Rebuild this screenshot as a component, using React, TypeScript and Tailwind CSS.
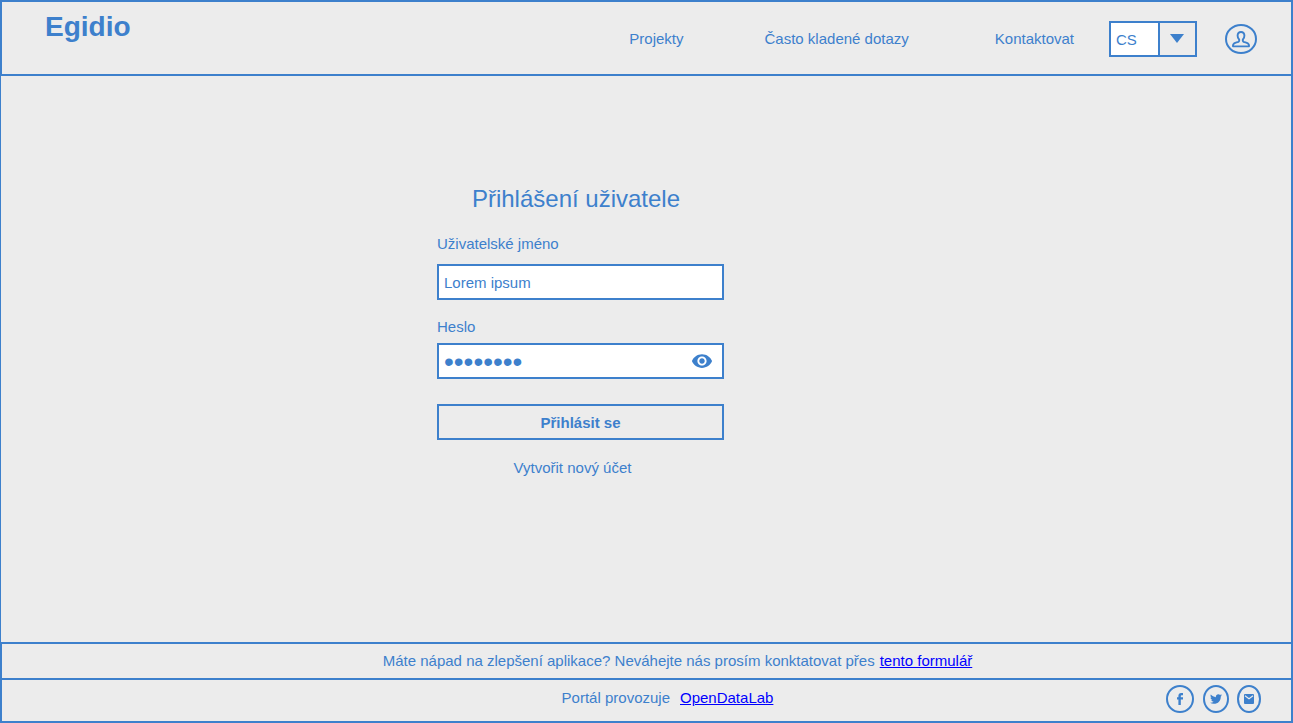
import { useState } from "react";
import { FaTwitter } from "react-icons/fa";
import { MdVisibility } from "react-icons/md";

const navLink = "leading-5 hover:underline";
const field =
  "h-9 w-full border-2 border-[#3d80cc] bg-white pl-[5px] outline-none";

function UserIcon() {
  return (
    <svg width="32" height="30" viewBox="0 0 32 30" fill="none" stroke="#3d80cc" aria-hidden="true">
      <ellipse cx="16" cy="15" rx="15" ry="14" strokeWidth="2" />
      <path
        d="M16 8c-2.200 0-3.400 1.500-3.400 3.500 0 1.700.5 2.700 1.300 3.600.6.800.4 2.200-.6 2.700-1.700.8-4.300 1-5 2.500-.3.700-.4 1.400-.3 2.100h16c.1-.7 0-1.400-.3-2.100-.7-1.500-3.300-1.700-5-2.500-1-.5-1.200-1.900-.6-2.700.8-.9 1.300-1.900 1.300-3.600 0-2-1.200-3.500-3.400-3.500z"
        strokeWidth="1.9"
        strokeLinejoin="round"
      />
    </svg>
  );
}

function FacebookIcon() {
  return (
    <svg width="8" height="12" viewBox="0 0 8 12" fill="#3d80cc" aria-hidden="true">
      <path d="M7 0v2.200H5.600c-.5 0-.8.3-.8.8v1.300H7v2.200H4.800V12H2.400V6.500H1V4.300h1.400V2.700C2.400 1.200 3.500 0 5.100 0z" />
    </svg>
  );
}

function MailIcon() {
  return (
    <svg width="10" height="10" viewBox="0 0 10 10" aria-hidden="true">
      <rect width="10" height="10" rx="1" fill="#3d80cc" />
      <path d="M1 1.800l4 3 4-3" fill="none" stroke="#ececec" strokeWidth="1.100" />
    </svg>
  );
}

export default function App() {
  const [visible, setVisible] = useState(false);
  return (
    <div className="flex min-h-screen flex-col bg-[#ececec] font-['Liberation_Sans',Arial,sans-serif] text-[15px] leading-5 text-[#3d80cc]">
      <header className="flex min-h-[76px] items-start justify-between border-2 border-[#3d80cc] pr-[34px] pl-[43px]">
        <div className="pt-[9px] text-[28px] leading-8 font-bold">Egidio</div>
        <div className="flex items-center pt-[19px]">
          <nav className="flex items-center">
            <a href="#projekty" className={`${navLink} mr-[81px]`}>Projekty</a>
            <a href="#dotazy" className={`${navLink} mr-[86px]`}>Často kladené dotazy</a>
            <a href="#kontakt" className={`${navLink} mr-[35px]`}>Kontaktovat</a>
          </nav>
          <div className="relative mr-7 h-9 w-[88px] border-2 border-[#3d80cc]">
            <select
              aria-label="Jazyk"
              defaultValue="CS"
              className="h-full w-full appearance-none bg-white pt-[2px] pl-[5px] outline-none"
            >
              <option>CS</option>
              <option>EN</option>
            </select>
            <span className="pointer-events-none absolute inset-y-0 right-0 flex w-[37px] items-center justify-center border-l-2 border-[#3d80cc] bg-[#ececec] pr-[2px] pb-[1px]">
              <svg width="14" height="9" viewBox="0 0 14 9" fill="#3d80cc" aria-hidden="true">
                <path d="M0 0h14L7 9z" />
              </svg>
            </span>
          </div>
          <button type="button" aria-label="Uživatel">
            <UserIcon />
          </button>
        </div>
      </header>

      <main className="flex grow justify-center border-r-2 border-l border-[#3d80cc] pt-[109px] pr-[131px] pb-10">
        <form className="flex w-[287px] flex-col" onSubmit={(e) => e.preventDefault()}>
          <h1 className="pr-[9px] text-center text-2xl leading-7">Přihlášení uživatele</h1>
          <label htmlFor="username" className="mt-[21px] mb-[10px]">Uživatelské jméno</label>
          <input id="username" type="text" defaultValue="Lorem ipsum" className={field} />
          <label htmlFor="password" className="mt-[17px] mb-[6px]">Heslo</label>
          <div className="relative">
            <input
              id="password"
              type={visible ? "text" : "password"}
              defaultValue="heslo123"
              className={`${field} pr-10 ${visible ? "" : "pt-[2px] text-[28px]"}`}
            />
            <button
              type="button"
              aria-label="Zobrazit heslo"
              onClick={() => setVisible(!visible)}
              className="absolute inset-y-0 right-[11px] flex items-center"
            >
              <MdVisibility size={22} />
            </button>
          </div>
          <button type="submit" className="mt-[25px] h-9 border-2 border-[#3d80cc] pt-[2px] font-bold">
            Přihlásit se
          </button>
          <div className="mt-[18px] pr-4 text-center">
            <a href="#registrace" className="hover:underline">Vytvořit nový účet</a>
          </div>
        </form>
      </main>

      <footer className="border-2 border-[#3d80cc]">
        <p className="flex justify-center gap-[5px] border-b-2 border-[#3d80cc] pt-[7px] pb-[7px] pl-[62px]">
          Máte nápad na zlepšení aplikace? Neváhejte nás prosím konktatovat přes
          <a href="#formular" className="text-[#0000ff] underline">tento formulář</a>
        </p>
        <div className="grid grid-cols-[1fr_auto_1fr] items-start pt-[5px] pr-[30px] pb-2 pl-[72px]">
          <p className="col-start-2 flex gap-[10px] pt-[3px]">
            Portál provozuje
            <a href="#opendatalab" className="text-[#0000ff] underline">OpenDataLab</a>
          </p>
          <div className="flex justify-end">
            <a href="#facebook" aria-label="Facebook" className="mr-[9px] flex h-7 w-7 items-center justify-center rounded-[50%] border-2 border-[#3d80cc]">
              <FacebookIcon />
            </a>
            <a href="#twitter" aria-label="Twitter" className="mr-2 flex h-7 w-[26px] items-center justify-center rounded-[50%] border-2 border-[#3d80cc]">
              <FaTwitter size={12} />
            </a>
            <a href="#email" aria-label="E-mail" className="flex h-7 w-6 items-center justify-center rounded-[50%] border-2 border-[#3d80cc]">
              <MailIcon />
            </a>
          </div>
        </div>
      </footer>
    </div>
  );
}
